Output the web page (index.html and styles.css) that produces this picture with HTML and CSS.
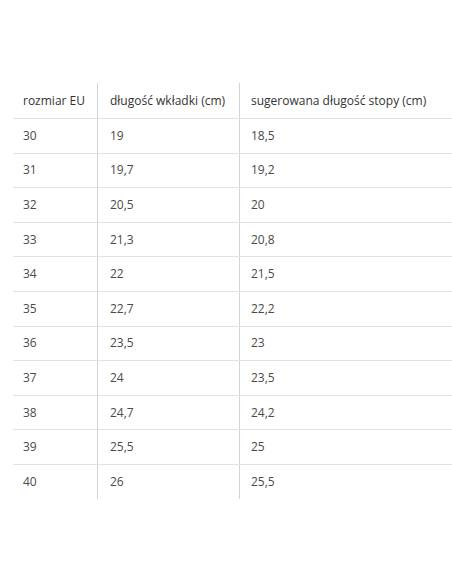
FILE: index.html
```html
<!DOCTYPE html>
<html lang="pl">
<head>
<meta charset="utf-8">
<link rel="stylesheet" href="styles.css">
</head>
<body>
<table class="sizes">
  <thead>
    <tr><th class="c1">rozmiar EU</th><th class="c2">długość wkładki (cm)</th><th class="c3">sugerowana długość stopy (cm)</th></tr>
  </thead>
  <tbody>
    <tr><td>30</td><td>19</td><td>18,5</td></tr>
    <tr><td>31</td><td>19,7</td><td>19,2</td></tr>
    <tr><td>32</td><td>20,5</td><td>20</td></tr>
    <tr><td>33</td><td>21,3</td><td>20,8</td></tr>
    <tr><td>34</td><td>22</td><td>21,5</td></tr>
    <tr><td>35</td><td>22,7</td><td>22,2</td></tr>
    <tr><td>36</td><td>23,5</td><td>23</td></tr>
    <tr><td>37</td><td>24</td><td>23,5</td></tr>
    <tr><td>38</td><td>24,7</td><td>24,2</td></tr>
    <tr><td>39</td><td>25,5</td><td>25</td></tr>
    <tr><td>40</td><td>26</td><td>25,5</td></tr>
  </tbody>
</table>
</body>
</html>
```
FILE: styles.css
```css
html, body {
  margin: 0;
  padding: 0;
  background: #fff;
}
body {
  padding: 83px 0 0 13px;
  font-family: "Open Sans", "DejaVu Sans", sans-serif;
  font-size: 12px;
  color: #4a4a4a;
}
.sizes {
  width: 439px;
  border-collapse: collapse;
  table-layout: fixed;
}
.sizes th,
.sizes td {
  text-align: left;
  padding: 0 0 0 10px;
  line-height: 16px;
  vertical-align: middle;
}
.sizes th {
  height: 35px;
  font-weight: 400;
  color: #333;
  border-bottom: 1px solid #e2e2e2;
}
.sizes td {
  height: 33.6px;
  border-bottom: 1px solid #e2e2e2;
}
.sizes tbody tr:last-child td {
  border-bottom: none;
}
.sizes th + th,
.sizes td + td {
  border-left: 1px solid #d4d4d4;
  padding-left: 12px;
}
.sizes th:nth-child(3),
.sizes td:nth-child(3) {
  padding-left: 11px;
}
.c1 { width: 74px; }
.c2 { width: 129px; }
.c3 { width: auto; }
```
